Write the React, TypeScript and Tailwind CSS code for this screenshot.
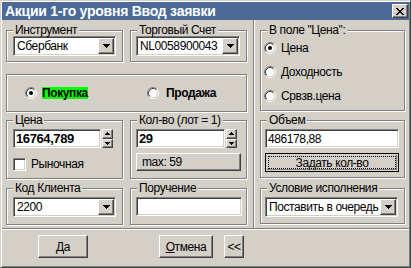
import type { ReactNode } from "react";

const sunken =
  "bg-white border border-t-[#808080] border-l-[#808080] border-r-white border-b-white shadow-[inset_1px_1px_0_#404040,inset_-1px_-1px_0_#d4d0c8]";
const raised =
  "bg-[#d4d0c8] border border-t-white border-l-white border-r-[#404040] border-b-[#404040] shadow-[inset_-1px_-1px_0_#808080]";

// etched group box, the caption sits on the top line
function Group({
  label,
  className,
  children,
}: {
  label?: string;
  className?: string;
  children?: ReactNode;
}) {
  return (
    <div
      className={`shrink-0 border border-[#808080] shadow-[inset_1px_1px_0_#fff,1px_1px_0_#fff] ${className ?? ""}`}
    >
      {label && (
        <div className="-mt-[7px] ml-[6px] w-fit px-[2px] bg-[#d4d0c8] leading-[12px] whitespace-nowrap">
          {label}
        </div>
      )}
      {children}
    </div>
  );
}

function ArrowDown() {
  return (
    <svg width="7" height="4" viewBox="0 0 7 4" shapeRendering="crispEdges">
      <path d="M0 0h7v1H0zM1 1h5v1H1zM2 2h3v1H2zM3 3h1v1H3z" fill="#000" />
    </svg>
  );
}

function Combo({ value }: { value: string }) {
  return (
    <div className={`flex h-[20px] p-[1px] ${sunken}`}>
      <span className="flex-1 flex items-center pl-[2px] whitespace-nowrap overflow-hidden">
        {value}
      </span>
      <div
        className={`w-[16px] h-[16px] flex items-center justify-center ${raised}`}
      >
        <ArrowDown />
      </div>
    </div>
  );
}

function SpinArrow({ up }: { up?: boolean }) {
  return (
    <svg width="5" height="3" viewBox="0 0 5 3" shapeRendering="crispEdges">
      <path
        d={up ? "M2 0h1v1H2zM1 1h3v1H1zM0 2h5v1H0z" : "M0 0h5v1H0zM1 1h3v1H1zM2 2h1v1H2z"}
        fill="#000"
      />
    </svg>
  );
}

function Spin({ value }: { value: string }) {
  return (
    <div className="flex h-[19px] gap-[1px]">
      <div className={`flex-1 flex items-center pl-[2px] font-bold text-[13px] ${sunken}`}>
        {value}
      </div>
      <div className="w-[11px] flex flex-col">
        <div className={`flex-1 flex items-center justify-center ${raised}`}>
          <SpinArrow up />
        </div>
        <div className={`flex-1 flex items-center justify-center ${raised}`}>
          <SpinArrow />
        </div>
      </div>
    </div>
  );
}

function Radio({ checked }: { checked?: boolean }) {
  return (
    <svg width="12" height="12" viewBox="0 0 12 12" className="shrink-0">
      <circle cx="6" cy="6" r="4.5" fill="#fff" />
      <path d="M2.11 9.89A5.5 5.5 0 0 1 9.89 2.11" fill="none" stroke="#808080" />
      <path d="M9.89 2.11A5.5 5.5 0 0 1 2.11 9.89" fill="none" stroke="#fff" />
      <path d="M2.82 9.18A4.5 4.5 0 0 1 9.18 2.82" fill="none" stroke="#404040" />
      <path d="M9.18 2.82A4.5 4.5 0 0 1 2.82 9.18" fill="none" stroke="#d4d0c8" />
      {checked && <circle cx="6" cy="6" r="2" fill="#000" />}
    </svg>
  );
}

function Button({
  className,
  children,
}: {
  className?: string;
  children: ReactNode;
}) {
  return (
    <div
      className={`h-[23px] flex items-center justify-center ${raised} ${className ?? ""}`}
    >
      {children}
    </div>
  );
}

export default function App() {
  return (
    <div className="w-[411px] h-[268px] flex flex-col bg-[#d4d0c8] border border-t-[#d4d0c8] border-l-[#d4d0c8] border-r-[#404040] border-b-[#404040] shadow-[inset_1px_1px_0_#fff,inset_-1px_-1px_0_#808080] p-[1px] font-['Liberation_Sans',Arial,sans-serif] text-[12px] leading-[14px] tracking-[-0.4px] text-black select-none">
      {/* title bar */}
      <div className="h-[18px] shrink-0 flex items-center justify-between bg-[#4b6a97] pl-[3px] pr-[1px]">
        <span className="text-white font-bold text-[14px] tracking-[-0.25px]">
          Акции 1-го уровня Ввод заявки
        </span>
        <div className={`w-[16px] h-[14px] flex items-center justify-center ${raised}`}>
          <svg width="8" height="7" viewBox="0 0 8 7" shapeRendering="crispEdges">
            <path d="M0 0h2v1H0zM6 0h2v1H6zM1 1h2v1H1zM5 1h2v1H5zM2 2h4v1H2zM3 3h2v1H3zM2 4h4v1H2zM1 5h2v1H1zM5 5h2v1H5zM0 6h2v1H0zM6 6h2v1H6z" fill="#000" />
          </svg>
        </div>
      </div>

      <div className="h-[208px] shrink-0 flex">
        {/* left side */}
        <div className="w-[251px] pl-[4px] pt-[10px] flex flex-col">
          <div className="flex gap-[7px]">
            <Group label="Инструмент" className="w-[117px] h-[32px]">
              <div className="px-[6px]">
                <Combo value="Сбербанк" />
              </div>
            </Group>
            <Group label="Торговый Счет" className="w-[117px] h-[32px]">
              <div className="pl-[5px] pr-[6px]">
                <Combo value="NL0058900043" />
              </div>
            </Group>
          </div>

          <Group className="w-[241px] h-[38px] mt-[12px]">
            <div className="h-full flex items-center pl-[18px] font-bold">
              <div className="w-[122px] flex items-center gap-[5px]">
                <Radio checked />
                <span className="bg-[#00ff00] leading-[12px]">Покупка</span>
              </div>
              <div className="flex items-center gap-[7px]">
                <Radio />
                <span>Продажа</span>
              </div>
            </div>
          </Group>

          <div className="flex gap-[7px] mt-[8px]">
            <Group label="Цена" className="w-[117px] h-[59px]">
              <div className="pl-[6px] pr-[9px] pt-[3px]">
                <Spin value="16764,789" />
                <div className="flex items-center gap-[5px] mt-[9px]">
                  <div className={`w-[13px] h-[13px] ${sunken}`} />
                  <span>Рыночная</span>
                </div>
              </div>
            </Group>
            <Group label="Кол-во (лот = 1)" className="w-[117px] h-[59px]">
              <div className="pl-[5px] pr-[5px] pt-[3px]">
                <div className="pr-[4px]">
                  <Spin value="29" />
                </div>
                <div className={`h-[18px] mt-[5px] flex items-center pl-[5px] ${raised}`}>
                  max: 59
                </div>
              </div>
            </Group>
          </div>

          <div className="flex gap-[7px] mt-[9px]">
            <Group label="Код Клиента" className="w-[117px] h-[37px]">
              <div className="px-[6px] pt-[3px]">
                <Combo value="2200" />
              </div>
            </Group>
            <Group label="Поручение" className="w-[117px] h-[37px]">
              <div className="pl-[5px] pr-[4px] pt-[3px]">
                <div className={`h-[19px] ${sunken}`} />
              </div>
            </Group>
          </div>
        </div>

        <div className="w-[2px] border-l border-l-[#808080] border-r border-r-white" />

        {/* right side */}
        <div className="w-[154px] pl-[5px] pt-[10px] flex flex-col">
          <Group label='В поле "Цена":' className="w-[145px] h-[81px]">
            <div className="pl-[3px]">
              <div className="h-[24px] flex items-center gap-[5px]">
                <Radio checked />
                <span>Цена</span>
              </div>
              <div className="h-[24px] flex items-center gap-[5px]">
                <Radio />
                <span>Доходность</span>
              </div>
              <div className="h-[24px] flex items-center gap-[5px]">
                <Radio />
                <span>Срвзв.цена</span>
              </div>
            </div>
          </Group>

          <Group label="Объем" className="w-[145px] h-[58px] mt-[9px]">
            <div className="pl-[4px] pr-[5px] pt-[3px]">
              <div className={`h-[19px] flex items-center pl-[2px] ${sunken}`}>
                486178,88
              </div>
              <div className="h-[19px] mt-[5px] border border-black p-[1px] bg-[#d4d0c8]">
                <div className={`h-full p-[1px] border-0 ${raised}`}>
                  <div className="h-full border border-dotted border-black flex items-center justify-center">
                    Задать кол-во
                  </div>
                </div>
              </div>
            </div>
          </Group>

          <Group label="Условие исполнения" className="w-[145px] h-[36px] mt-[10px]">
            <div className="pl-[4px] pr-[6px] pt-[3px]">
              <Combo value="Поставить в очередь" />
            </div>
          </Group>
        </div>
      </div>

      <div className="h-[2px] shrink-0 border-t border-t-[#808080] border-b border-b-white" />

      {/* bottom buttons */}
      <div className="flex-1 flex items-start pt-[5px]">
        <Button className="ml-[36px] w-[50px]">
          <span>
            <span className="underline">Д</span>а
          </span>
        </Button>
        <Button className="ml-[71px] w-[54px]">
          <span>
            <span className="underline">О</span>тмена
          </span>
        </Button>
        <Button className="ml-[11px] w-[20px]">&lt;&lt;</Button>
      </div>
    </div>
  );
}
